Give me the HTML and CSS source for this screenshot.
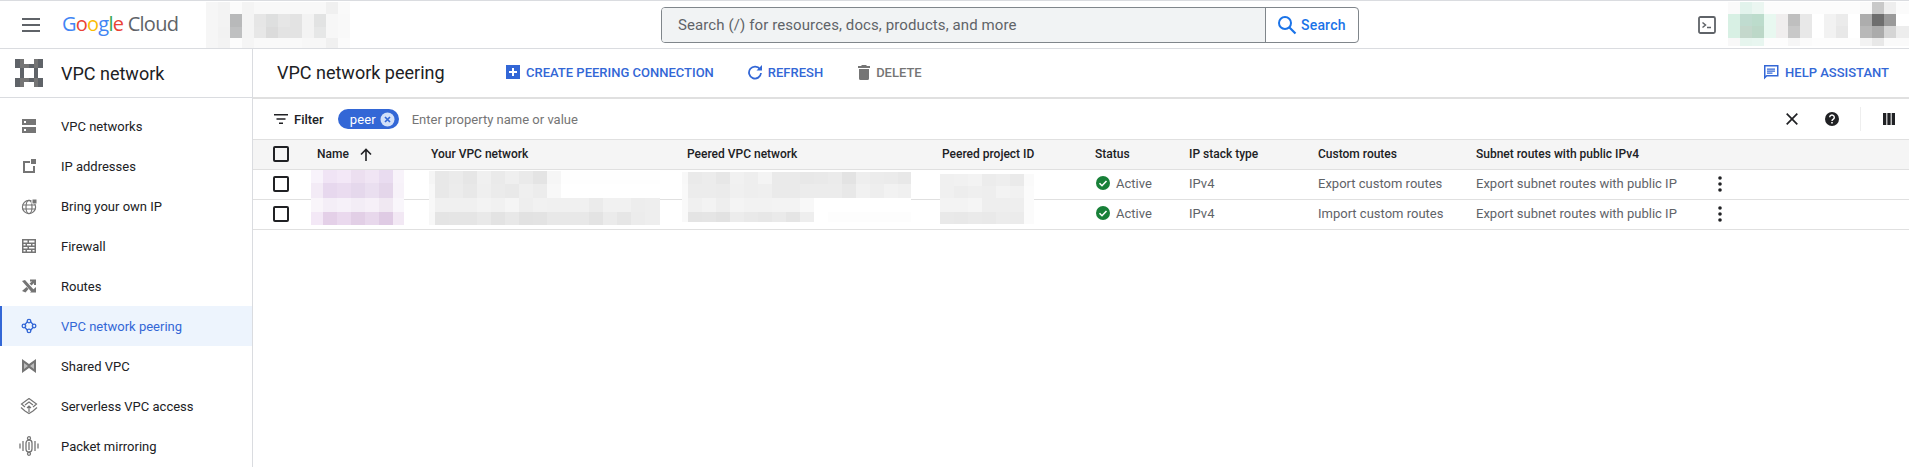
FILE: index.html
```html
<!DOCTYPE html>
<html lang="en">
<head>
    <meta charset="UTF-8">
    <title>VPC network peering</title>
    <link rel="stylesheet" href="styles.css">
</head>
<body>
    <header class="topbar">
        <svg class="menu-icon" width="18" height="14" viewBox="0 0 18 14"><path d="M0 0h18v2H0zM0 6h18v2H0zM0 12h18v2H0z" fill="#5f6368"/></svg>
        <div class="logo"><span class="g-blue">G</span><span class="g-red">o</span><span class="g-yellow">o</span><span class="g-blue">g</span><span class="g-green">l</span><span class="g-red">e</span> <span class="logo-cloud">Cloud</span></div>
        <div class="blur blur-org"></div>
        <div class="search">
            <div class="search-input">Search (/) for resources, docs, products, and more</div>
            <div class="search-btn">
                <svg width="20" height="20" viewBox="0 0 20 20"><circle cx="8" cy="8" r="6" fill="none" stroke="#1a73e8" stroke-width="2"/><path d="M12.5 12.5l6 6" stroke="#1a73e8" stroke-width="2.2"/></svg>
                <span>Search</span>
            </div>
        </div>
        <svg class="shell-icon" width="18" height="18" viewBox="0 0 18 18"><rect x="1" y="1" width="16" height="16" rx="1.5" fill="none" stroke="#5f6368" stroke-width="1.8"/><path d="M4.5 6.5l3 2.5-3 2.5" fill="none" stroke="#5f6368" stroke-width="1.5"/><path d="M9 11.5h4" stroke="#5f6368" stroke-width="1.5"/></svg>
        <div class="blur blur-user"></div>
    </header>

    <div class="layout">
        <aside class="sidebar">
            <div class="side-title">
                <svg width="28" height="28" viewBox="0 0 28 28">
                    <path d="M5 9h4v10H5zM19 9h4v10h-4zM9 5h10v4H9zM9 19h10v4H9z" fill="#5f6368"/>
                    <path d="M0 0h5v9H0zM0 19h5v9H0zM23 0h5v9h-5zM23 19h5v9h-5z" fill="#5f6368"/>
                    <path d="M5 0h4v9H5zM5 19h4v9H5zM19 0h4v9h-4zM19 19h4v9h-4z" fill="#757575"/>
                    <path d="M9 5h5v4H9zM9 19h5v4H9z" fill="#757575"/>
                </svg>
                <span>VPC network</span>
            </div>
            <nav class="side-nav">
                <a class="nav-item">
                    <svg width="18" height="18" viewBox="0 0 18 18"><path fill-rule="evenodd" d="M2 2h14v6H2zM4 4v2h2V4zM2 10h14v6H2zM4 12v2h2v-2z" fill="#757575"/></svg>
                    <span>VPC networks</span>
                </a>
                <a class="nav-item">
                    <svg width="18" height="18" viewBox="0 0 18 18"><path d="M3 4h7v2H5v8h8v-5h2v7H3z" fill="#757575"/><path d="M11 2h5v5h-5z" fill="#757575"/></svg>
                    <span>IP addresses</span>
                </a>
                <a class="nav-item">
                    <svg width="18" height="18" viewBox="0 0 18 18"><g fill="none" stroke="#757575" stroke-width="1.2"><circle cx="9" cy="10" r="6.6"/><ellipse cx="9" cy="10" rx="3" ry="6.6"/><path d="M2.4 8h13M2.4 12h13"/></g><path d="M11.5 1.5h5.5V7h-5.500z" fill="#fff"/><path d="M12.500 2.500h4v4h-4z" fill="#757575"/></svg>
                    <span>Bring your own IP</span>
                </a>
                <a class="nav-item">
                    <svg width="18" height="18" viewBox="0 0 18 18"><path fill-rule="evenodd" d="M2 2h14v14H2zM3.500 3.500v2h4v-2zM9 3.500v2h5.500v-2zM3.500 7v1.500h2V7zM7 7v1.500h4V7zM12.500 7v1.500h2V7zM3.500 10v1.500h4V10zM9 10v1.500h5.500V10zM3.500 13v1.500h2V13zM7 13v1.500h4V13zM12.500 13v1.500h2V13z" fill="#757575"/></svg>
                    <span>Firewall</span>
                </a>
                <a class="nav-item">
                    <svg width="18" height="18" viewBox="0 0 18 18"><path d="M2 4l3-1 9 10-2.500 2zM2 14l3.500 1.500 3-3.500-2-2z" fill="#757575"/><path d="M9.500 6.500l2.500-2H10V2.500h6V8h-2V6l-2.500 2.500z" fill="#757575"/><path d="M10 15.500h6V10l-4 3.500z" fill="#757575"/></svg>
                    <span>Routes</span>
                </a>
                <a class="nav-item nav-active">
                    <svg width="18" height="18" viewBox="-2 -2 22 22"><g fill="none" stroke="#3367d6" stroke-width="1.600"><path d="M7 3.800L3.500 8M11 3.800L14.500 8M3.500 10l3.500 4.200M14.500 10L11 14.200"/><circle cx="9" cy="3" r="2.200"/><circle cx="9" cy="15" r="2.200"/><circle cx="2.800" cy="9" r="2.200"/><circle cx="15.200" cy="9" r="2.200"/></g></svg>
                    <span>VPC network peering</span>
                </a>
                <a class="nav-item">
                    <svg width="18" height="18" viewBox="0 0 18 18"><path d="M2 2l7 5 7-5v14l-7-5-7 5z" fill="#757575"/><path d="M4 6v6l4-3zM14 6v6l-4-3z" fill="#bdbdbd"/></svg>
                    <span>Shared VPC</span>
                </a>
                <a class="nav-item">
                    <svg width="18" height="18" viewBox="0 0 18 18"><g fill="none" stroke="#757575" stroke-width="1.200"><path d="M9 1.500L16.500 7 13 10M9 1.500L1.500 7 5 10M1 10.500L5 14l4 2.500 4-2.500 4-3.500"/><path d="M5 8l4-3 4 3M9 15V9M7 11l2-2 2 2"/></g></svg>
                    <span>Serverless VPC access</span>
                </a>
                <a class="nav-item">
                    <svg width="20" height="20" viewBox="0 0 20 20"><g fill="none" stroke="#757575" stroke-width="1.300"><path d="M1 7.500v5M4 5v10M16 5v10M19 7.500v5"/><rect x="7" y="4" width="6" height="12" rx="3"/><path d="M10 6v8"/><circle cx="10" cy="2.200" r="1.500"/><circle cx="10" cy="17.800" r="1.500"/></g></svg>
                    <span>Packet mirroring</span>
                </a>
            </nav>
        </aside>

        <main class="content">
            <div class="toolbar">
                <h1>VPC network peering</h1>
                <a class="action action-create">
                    <svg width="14" height="14" viewBox="0 0 14 14"><path fill-rule="evenodd" d="M0 0h14v14H0zM6 3v3H3v2h3v3h2V8h3V6H8V3z" fill="#3367d6"/></svg>
                    CREATE PEERING CONNECTION
                </a>
                <a class="action action-refresh">
                    <svg width="14" height="15" viewBox="0 0 14 15"><path d="M12 4.200A6 6 0 1 0 13 8" fill="none" stroke="#3367d6" stroke-width="1.800"/><path d="M8.500 5.500H14V0z" fill="#3367d6"/></svg>
                    REFRESH
                </a>
                <a class="action action-delete">
                    <svg width="12" height="15" viewBox="0 0 12 15"><path d="M4 0h4l1 1h3v2H0V1h3zM1 4h10v9.500a1.500 1.500 0 0 1-1.500 1.500h-7A1.500 1.500 0 0 1 1 13.500z" fill="#757575"/></svg>
                    DELETE
                </a>
                <a class="action action-help">
                    <svg width="16" height="16" viewBox="0 0 16 16"><path fill-rule="evenodd" d="M1 1h14.500v11.500H4L1 15.500zM2.500 2.500v9.300L3.500 11h10.500V2.500z" fill="#3367d6"/><path d="M4 4.500h8v1.200H4zM4 6.500h8v1.200H4zM4 8.500h5.500v1.200H4z" fill="#3367d6"/></svg>
                    HELP ASSISTANT
                </a>
            </div>

            <div class="filter-row">
                <svg width="14" height="10" viewBox="0 0 14 10"><path d="M0 0h14v1.600H0zM2.500 4.200h9v1.600h-9zM5 8.400h4V10H5z" fill="#202124"/></svg>
                <span class="filter-label">Filter</span>
                <span class="chip">peer
                    <svg width="15" height="15" viewBox="0 0 15 15"><circle cx="7.500" cy="7.500" r="7" fill="#d2e0f8"/><path d="M5 5l5 5M10 5l-5 5" stroke="#3367d6" stroke-width="1.700"/></svg>
                </span>
                <span class="filter-input">Enter property name or value</span>
                <div class="filter-tools">
                    <svg class="tool-close" width="12" height="12" viewBox="0 0 12 12"><path d="M.7.7l10.600 10.600M11.300.7L.7 11.300" stroke="#202124" stroke-width="1.700"/></svg>
                    <svg class="tool-help" width="14" height="14" viewBox="0 0 14 14"><circle cx="7" cy="7" r="7" fill="#202124"/><path d="M4.700 5.300A2.300 2.300 0 1 1 8.300 7.200C7.500 7.800 7 8 7 9" fill="none" stroke="#fff" stroke-width="1.400"/><path d="M6.200 10h1.600v1.600H6.200z" fill="#fff"/></svg>
                    <span class="tool-sep"></span>
                    <svg class="tool-cols" width="12" height="12" viewBox="0 0 12 12"><path d="M0 0h3.300v12H0zM4.350 0h3.300v12h-3.300zM8.700 0H12v12H8.700z" fill="#202124"/></svg>
                </div>
            </div>

            <div class="table-wrap">
                <table class="peers">
                    <thead>
                        <tr>
                            <th><span class="checkbox"></span></th>
                            <th>Name <svg class="sort-icon" width="12" height="13" viewBox="0 0 12 13"><path d="M6 13V1.500M1 6.500L6 1.500l5 5" fill="none" stroke="#202124" stroke-width="1.600"/></svg></th>
                            <th>Your VPC network</th>
                            <th>Peered VPC network</th>
                            <th>Peered project ID</th>
                            <th>Status</th>
                            <th>IP stack type</th>
                            <th>Custom routes</th>
                            <th>Subnet routes with public IPv4</th>
                            <th></th>
                        </tr>
                    </thead>
                    <tbody>
                        <tr>
                            <td><span class="checkbox"></span></td>
                            <td></td>
                            <td></td>
                            <td></td>
                            <td></td>
                            <td><span class="status"><svg width="14" height="14" viewBox="0 0 14 14"><circle cx="7" cy="7" r="7" fill="#188038"/><path d="M3.500 7.200l2.500 2.500 4.500-4.700" fill="none" stroke="#fff" stroke-width="1.600"/></svg>Active</span></td>
                            <td>IPv4</td>
                            <td>Export custom routes</td>
                            <td>Export subnet routes with public IP</td>
                            <td><svg class="kebab" width="4" height="16" viewBox="0 0 4 16"><circle cx="2" cy="2" r="1.800"/><circle cx="2" cy="8" r="1.800"/><circle cx="2" cy="14" r="1.800"/></svg></td>
                        </tr>
                        <tr>
                            <td><span class="checkbox"></span></td>
                            <td></td>
                            <td></td>
                            <td></td>
                            <td></td>
                            <td><span class="status"><svg width="14" height="14" viewBox="0 0 14 14"><circle cx="7" cy="7" r="7" fill="#188038"/><path d="M3.500 7.200l2.500 2.500 4.500-4.700" fill="none" stroke="#fff" stroke-width="1.600"/></svg>Active</span></td>
                            <td>IPv4</td>
                            <td>Import custom routes</td>
                            <td>Export subnet routes with public IP</td>
                            <td><svg class="kebab" width="4" height="16" viewBox="0 0 4 16"><circle cx="2" cy="2" r="1.800"/><circle cx="2" cy="8" r="1.800"/><circle cx="2" cy="14" r="1.800"/></svg></td>
                        </tr>
                    </tbody>
                </table>
                <div class="blur blur-name"></div>
                <div class="blur blur-vpc"></div>
                <div class="blur blur-peer"></div>
                <div class="blur blur-project"></div>
            </div>
        </main>
    </div>
</body>
</html>
```

FILE: styles.css
```css
* {
    box-sizing: border-box;
}

html, body {
    margin: 0;
    height: 100%;
    overflow: hidden;
    background: #fff;
    font-family: Roboto, "Liberation Sans", sans-serif;
    color: #202124;
}

svg {
    display: block;
    flex: none;
}

/* top bar */
.topbar {
    position: relative;
    display: flex;
    align-items: center;
    height: 49px;
    border-top: 1px solid #dadce0;
    border-bottom: 1px solid #dadce0;
    padding-left: 22px;
}

.logo {
    width: 250px;
    margin-left: 22px;
    padding-bottom: 3px;
    font-family: "Open Sans", sans-serif;
    font-size: 20px;
    letter-spacing: -0.75px;
    white-space: nowrap;
}

.g-blue { color: #4285f4; }
.g-red { color: #ea4335; }
.g-yellow { color: #fbbc04; }
.g-green { color: #34a853; }
.logo-cloud { color: #5f6368; }

.search {
    display: flex;
    width: 698px;
    height: 36px;
    margin-left: 349px;
    border: 1px solid #80868b;
    border-radius: 4px;
    overflow: hidden;
}

.search-input {
    flex: 1;
    display: flex;
    align-items: center;
    padding-left: 16px;
    background: #f1f3f4;
    border-right: 1px solid #80868b;
    color: #5f6368;
    font-size: 15px;
    letter-spacing: 0.1px;
}

.search-btn {
    display: flex;
    align-items: center;
    gap: 4px;
    width: 92px;
    padding-left: 11px;
    color: #1a73e8;
    font-size: 14px;
    font-weight: 500;
    letter-spacing: 0.2px;
}

.shell-icon {
    margin-left: 339px;
}

/* pixelated areas */
.blur {
    position: absolute;
    background-repeat: no-repeat;
}

.blur-org {
    left: 206px;
    top: 0;
    width: 144px;
    height: 47px;
    background-image:
        linear-gradient(90deg, #f6f6f6 0 12px, #f3f3f3 12px 24px, #fbfbfb 24px 36px, #f4f4f4 36px 48px, #f8f8f8 48px 120px, #f0f0f0 120px 132px, #fafafa 132px),
        linear-gradient(90deg, #f6f6f6 0 12px, #f3f3f3 12px 24px, #b8b9ba 24px 36px, #f4f4f4 36px 48px, #e6e6e6 48px 60px, #dedfdf 60px 72px, #e6e6e6 72px 84px, #e3e3e3 84px 96px, #f3f3f3 96px 108px, #e2e3e3 108px 120px, #f7f7f7 120px 132px, #f9f9f9 132px),
        linear-gradient(90deg, #f6f6f6 0 12px, #f2f2f2 12px 24px, #bfc0c1 24px 36px, #f4f4f4 36px 48px, #e7e7e7 48px 60px, #dbdbdb 60px 72px, #e3e3e3 72px 96px, #f3f3f3 96px 108px, #e6e7e7 108px 120px, #f7f7f7 120px 132px, #f9f9f9 132px),
        linear-gradient(90deg, #f6f6f6 0 12px, #f3f3f3 12px 24px, #fcfcfc 24px 36px, #f5f5f5 36px 48px, #f9f9f9 48px 96px, #f7f7f7 96px 120px, #f0f0f0 120px 132px, #fbfbfb 132px);
    background-size: 100% 12px, 100% 13px, 100% 12px, 100% 10px;
    background-position: 0 1px, 0 13px, 0 25px, 0 37px;
}

.blur-user {
    left: 1728px;
    top: 0;
    width: 181px;
    height: 45px;
    background-image:
        linear-gradient(90deg, #fafafa 0 12px, #e2f3ec 12px 24px, #ebf6f1 24px 36px, #fcfcfc 36px 132px, #fafafa 132px 144px, #c9c9c9 144px 156px, #eeeeee 156px 168px, #fbfbfb 168px),
        linear-gradient(90deg, #d8f0e4 0 12px, #c0dcd0 12px 24px, #bcdccc 24px 36px, #e8f8f0 36px 48px, #f0eeee 48px 60px, #bfbfbf 60px 72px, #e8e8e8 72px 84px, #fff 84px 96px, #f2f2f2 96px 108px, #ebebeb 108px 120px, #fff 120px 132px, #adadad 132px 144px, #6e6e6e 144px 156px, #9a9a9a 156px 168px, #fff 168px),
        linear-gradient(90deg, #d8f0e4 0 12px, #c4d8cc 12px 24px, #bcd8c8 24px 36px, #e8f8f0 36px 48px, #f0eeee 48px 60px, #c8c8c8 60px 72px, #e8e8e8 72px 84px, #fff 84px 96px, #f2f2f2 96px 108px, #e8e8e8 108px 120px, #fff 120px 132px, #b8b8b8 132px 144px, #ababab 144px 156px, #d5d5d5 156px 168px, #ededed 168px),
        linear-gradient(90deg, #f8f8f8 0 12px, #e6f5ee 12px 24px, #e8f6f0 24px 36px, #fdfdfd 36px 60px, #f6f6f6 60px 72px, #fbfbfb 72px 84px, #fdfdfd 84px 132px, #f3f3f3 132px 144px, #e8e8e8 144px 156px, #fafafa 156px);
    background-size: 100% 12px, 100% 12px, 100% 12px, 100% 8px;
    background-position: 0 1px, 0 13px, 0 25px, 0 37px;
}

.blur-name {
    left: 58px;
    top: 30px;
    width: 93px;
    height: 55px;
    background-image:
        linear-gradient(90deg, #f8f3fb 0 12px, #f0e4f5 12px 26px, #f3e8f7 26px 40px, #ecdff0 40px 54px, #f0e5f4 54px 68px, #e9dcf0 68px 82px, #f8f3fa 82px),
        linear-gradient(90deg, #f3ebf6 0 12px, #e7d8ee 12px 26px, #eadcf0 26px 40px, #e5d8ec 40px 54px, #eadff0 54px 68px, #e4d6ea 68px 82px, #f7f2f9 82px),
        linear-gradient(90deg, #f9f5fa 0 12px, #f4eef7 12px 26px, #f6f1f9 26px 40px, #f3edf6 40px 54px, #f6f0f8 54px 68px, #f0e8f2 68px 82px, #f9f6fb 82px),
        linear-gradient(90deg, #f3e8f6 0 12px, #e4d0e8 12px 26px, #ead9ee 26px 40px, #e2cfe6 40px 54px, #e8d8ec 54px 68px, #dfcbe4 68px 82px, #f2e8f4 82px);
    background-size: 100% 13px, 100% 15px, 100% 14px, 100% 13px;
    background-position: 0 0, 0 13px, 0 28px, 0 42px;
}

.blur-vpc {
    left: 176px;
    top: 31px;
    width: 231px;
    height: 54px;
    background-image:
        linear-gradient(90deg, #f5f5f5 0 6px, #e8e8e8 6px 20px, #ebebeb 20px 34px, #e6e6e6 34px 48px, #f0f0f0 48px 62px, #eaeaea 62px 76px, #efefef 76px 90px, #eaeaea 90px 104px, #e4e4e4 104px 118px, #f6f6f6 118px 132px, #fefefe 132px),
        linear-gradient(90deg, #f8f8f8 0 6px, #e8e8e8 6px 20px, #ececec 20px 34px, #e8e8e8 34px 48px, #efefef 48px 62px, #ebebeb 62px 76px, #e9e9e9 76px 90px, #efefef 90px 104px, #ececec 104px 118px, #f8f8f8 118px 132px, #fff 132px),
        linear-gradient(90deg, #f8f8f8 0 6px, #f0f0f0 6px 48px, #f3f3f3 48px 62px, #f1f1f1 62px 76px, #f5f5f5 76px 90px, #eeeeee 90px 104px, #f1f1f1 104px 118px, #f0f0f0 118px 160px, #ebebeb 160px 174px, #f1f1f1 174px 202px, #ededed 202px 216px, #eeeeee 216px),
        linear-gradient(90deg, #f7f7f7 0 6px, #e4e4e4 6px 20px, #e5e5e5 20px 48px, #e9e9e9 48px 62px, #e3e3e3 62px 76px, #e8e8e8 76px 90px, #e2e2e2 90px 104px, #e3e3e3 104px 118px, #e8e8e8 118px 160px, #e3e3e3 160px 174px, #ebebeb 174px 188px, #e6e6e6 188px 202px, #ececec 202px 216px, #eeeeee 216px);
    background-size: 100% 13px, 100% 14px, 100% 14px, 100% 13px;
    background-position: 0 0, 0 13px, 0 27px, 0 41px;
}

.blur-peer {
    left: 429px;
    top: 32px;
    width: 229px;
    height: 50px;
    background-image:
        linear-gradient(90deg, #f8f8f8 0 6px, #eaeaea 6px 20px, #ececec 20px 34px, #e7e7e7 34px 48px, #f1f1f1 48px 62px, #eeeeee 62px 76px, #f4f4f4 76px 90px, #eaeaea 90px 118px, #e8e8e8 118px 132px, #e9e9e9 132px 146px, #ebebeb 146px 160px, #e3e3e3 160px 174px, #eeeeee 174px 188px, #ececec 188px 202px, #ebebeb 202px 216px, #e8e8e8 216px),
        linear-gradient(90deg, #f9f9f9 0 6px, #ececec 6px 34px, #ebebeb 34px 48px, #f0f0f0 48px 62px, #eeeeee 62px 76px, #efefef 76px 90px, #eaeaea 90px 118px, #ececec 118px 160px, #e8e8e8 160px 174px, #f1f1f1 174px 188px, #eeeeee 188px 202px, #f2f2f2 202px 216px, #f0f0f0 216px),
        linear-gradient(90deg, #f9f9f9 0 6px, #f0f0f0 6px 20px, #f3f3f3 20px 34px, #eeeeee 34px 48px, #f4f4f4 48px 62px, #f2f2f2 62px 90px, #f3f3f3 90px 118px, #f8f8f8 118px 132px, #fff 132px),
        linear-gradient(90deg, #f9f9f9 0 6px, #e4e4e4 6px 20px, #e5e5e5 20px 34px, #e2e2e2 34px 48px, #ececec 48px 62px, #e9e9e9 62px 76px, #e7e7e7 76px 90px, #eaeaea 90px 104px, #e5e5e5 104px 118px, #eeeeee 118px 132px, #fff 132px 146px, #fdfdfd 146px);
    background-size: 100% 12px, 100% 14px, 100% 14px, 100% 10px;
    background-position: 0 0, 0 12px, 0 26px, 0 40px;
}

.blur-project {
    left: 687px;
    top: 34px;
    width: 94px;
    height: 50px;
    background-image:
        linear-gradient(90deg, #f0f0f0 0 14px, #f1f1f1 14px 28px, #f3f3f3 28px 42px, #ececec 42px 56px, #eeeeee 56px 70px, #eaeaea 70px 84px, #fafafa 84px),
        linear-gradient(90deg, #f0f0f0 0 14px, #ededed 14px 28px, #efefef 28px 42px, #eeeeee 42px 56px, #f3f3f3 56px 70px, #f1f1f1 70px 84px, #fbfbfb 84px),
        linear-gradient(90deg, #f3f3f3 0 14px, #f3f3f3 14px 28px, #f5f5f5 28px 42px, #eeeeee 42px 84px, #fbfbfb 84px),
        linear-gradient(90deg, #e9e9e9 0 14px, #e8e8e8 14px 28px, #eaeaea 28px 42px, #e9e9e9 42px 56px, #ececec 56px 70px, #ebebeb 70px 84px, #fbfbfb 84px);
    background-size: 100% 12px, 100% 12px, 100% 14px, 100% 12px;
    background-position: 0 0, 0 12px, 0 24px, 0 38px;
}

/* layout */
.layout {
    display: flex;
    height: calc(100vh - 49px);
}

.sidebar {
    flex: none;
    width: 253px;
    border-right: 1px solid #dadce0;
}

.side-title {
    display: flex;
    align-items: center;
    gap: 18px;
    height: 49px;
    padding-left: 15px;
    border-bottom: 1px solid #dadce0;
    font-size: 18px;
}

.side-nav {
    padding-top: 8px;
}

.nav-item {
    display: flex;
    align-items: center;
    height: 40px;
    padding-left: 20px;
    gap: 23px;
    font-size: 13px;
}

.nav-item svg[width="20"] {
    margin-left: -1px;
    margin-right: -1px;
}

.nav-active {
    background: #edf4fd;
    box-shadow: inset 2px 0 0 #3367d6;
    color: #3367d6;
}

/* page content */
.content {
    flex: 1;
    min-width: 0;
}

.toolbar {
    display: flex;
    align-items: center;
    height: 50px;
    padding-left: 24px;
    padding-bottom: 2px;
    border-bottom: 2px solid #e0e0e0;
}

h1 {
    margin: 0;
    width: 229px;
    font-size: 18px;
    font-weight: 400;
}

.action {
    display: flex;
    align-items: center;
    gap: 6px;
    font-size: 13px;
    font-weight: 500;
    color: #3367d6;
    white-space: nowrap;
}

.action-refresh {
    margin-left: 34px;
}

.action-delete {
    margin-left: 35px;
    color: #757575;
}

.action-help {
    margin-left: auto;
    margin-right: 20px;
}

.filter-row {
    display: flex;
    align-items: center;
    height: 41px;
    padding-left: 21px;
    border-bottom: 1px solid #e0e0e0;
    font-size: 13px;
}

.filter-label {
    margin-left: 6px;
    font-weight: 500;
}

.chip {
    display: flex;
    align-items: center;
    justify-content: space-between;
    width: 61px;
    height: 20px;
    margin-left: 14px;
    padding: 0 4px 0 12px;
    border-radius: 10px;
    background: #3367d6;
    color: #fff;
    letter-spacing: 0.2px;
}

.filter-input {
    margin-left: 13px;
    color: #757575;
}

.filter-tools {
    display: flex;
    align-items: center;
    margin-left: auto;
}

.tool-help {
    margin-left: 27px;
}

.tool-sep {
    width: 1px;
    height: 24px;
    margin-left: 21px;
    background: #eeeeee;
}

.tool-cols {
    margin-left: 22px;
    margin-right: 14px;
}

/* table */
.table-wrap {
    position: relative;
}

.peers {
    width: 100%;
    table-layout: fixed;
    border-collapse: collapse;
    font-size: 13px;
}

.peers th, .peers td {
    padding: 0;
    border-bottom: 1px solid #e0e0e0;
    text-align: left;
    white-space: nowrap;
}

.peers th {
    height: 29px;
    background: #f5f5f5;
    font-size: 12px;
    font-weight: 500;
}

.peers td {
    height: 30px;
    padding-bottom: 2px;
    color: #5f6368;
}

.peers th:nth-child(1) { width: 64px; padding-left: 20px; }
.peers td:nth-child(1) { padding: 0 0 0 20px; }
.peers td:nth-child(10) { padding: 0; }
.peers th:nth-child(2) { width: 114px; }
.peers th:nth-child(3) { width: 256px; }
.peers th:nth-child(4) { width: 255px; }
.peers th:nth-child(5) { width: 153px; }
.peers th:nth-child(6) { width: 94px; }
.peers th:nth-child(7) { width: 129px; }
.peers th:nth-child(8) { width: 158px; }
.peers th:nth-child(9) { width: 224px; }

.checkbox {
    display: block;
    width: 16px;
    height: 16px;
    border: 2px solid #202124;
    border-radius: 2px;
}

.sort-icon {
    display: inline-block;
    margin-left: 8px;
    vertical-align: -3px;
}

.status {
    display: flex;
    align-items: center;
    gap: 6px;
    margin-left: 1px;
}

.kebab {
    margin-left: 18px;
    fill: #202124;
}
```
